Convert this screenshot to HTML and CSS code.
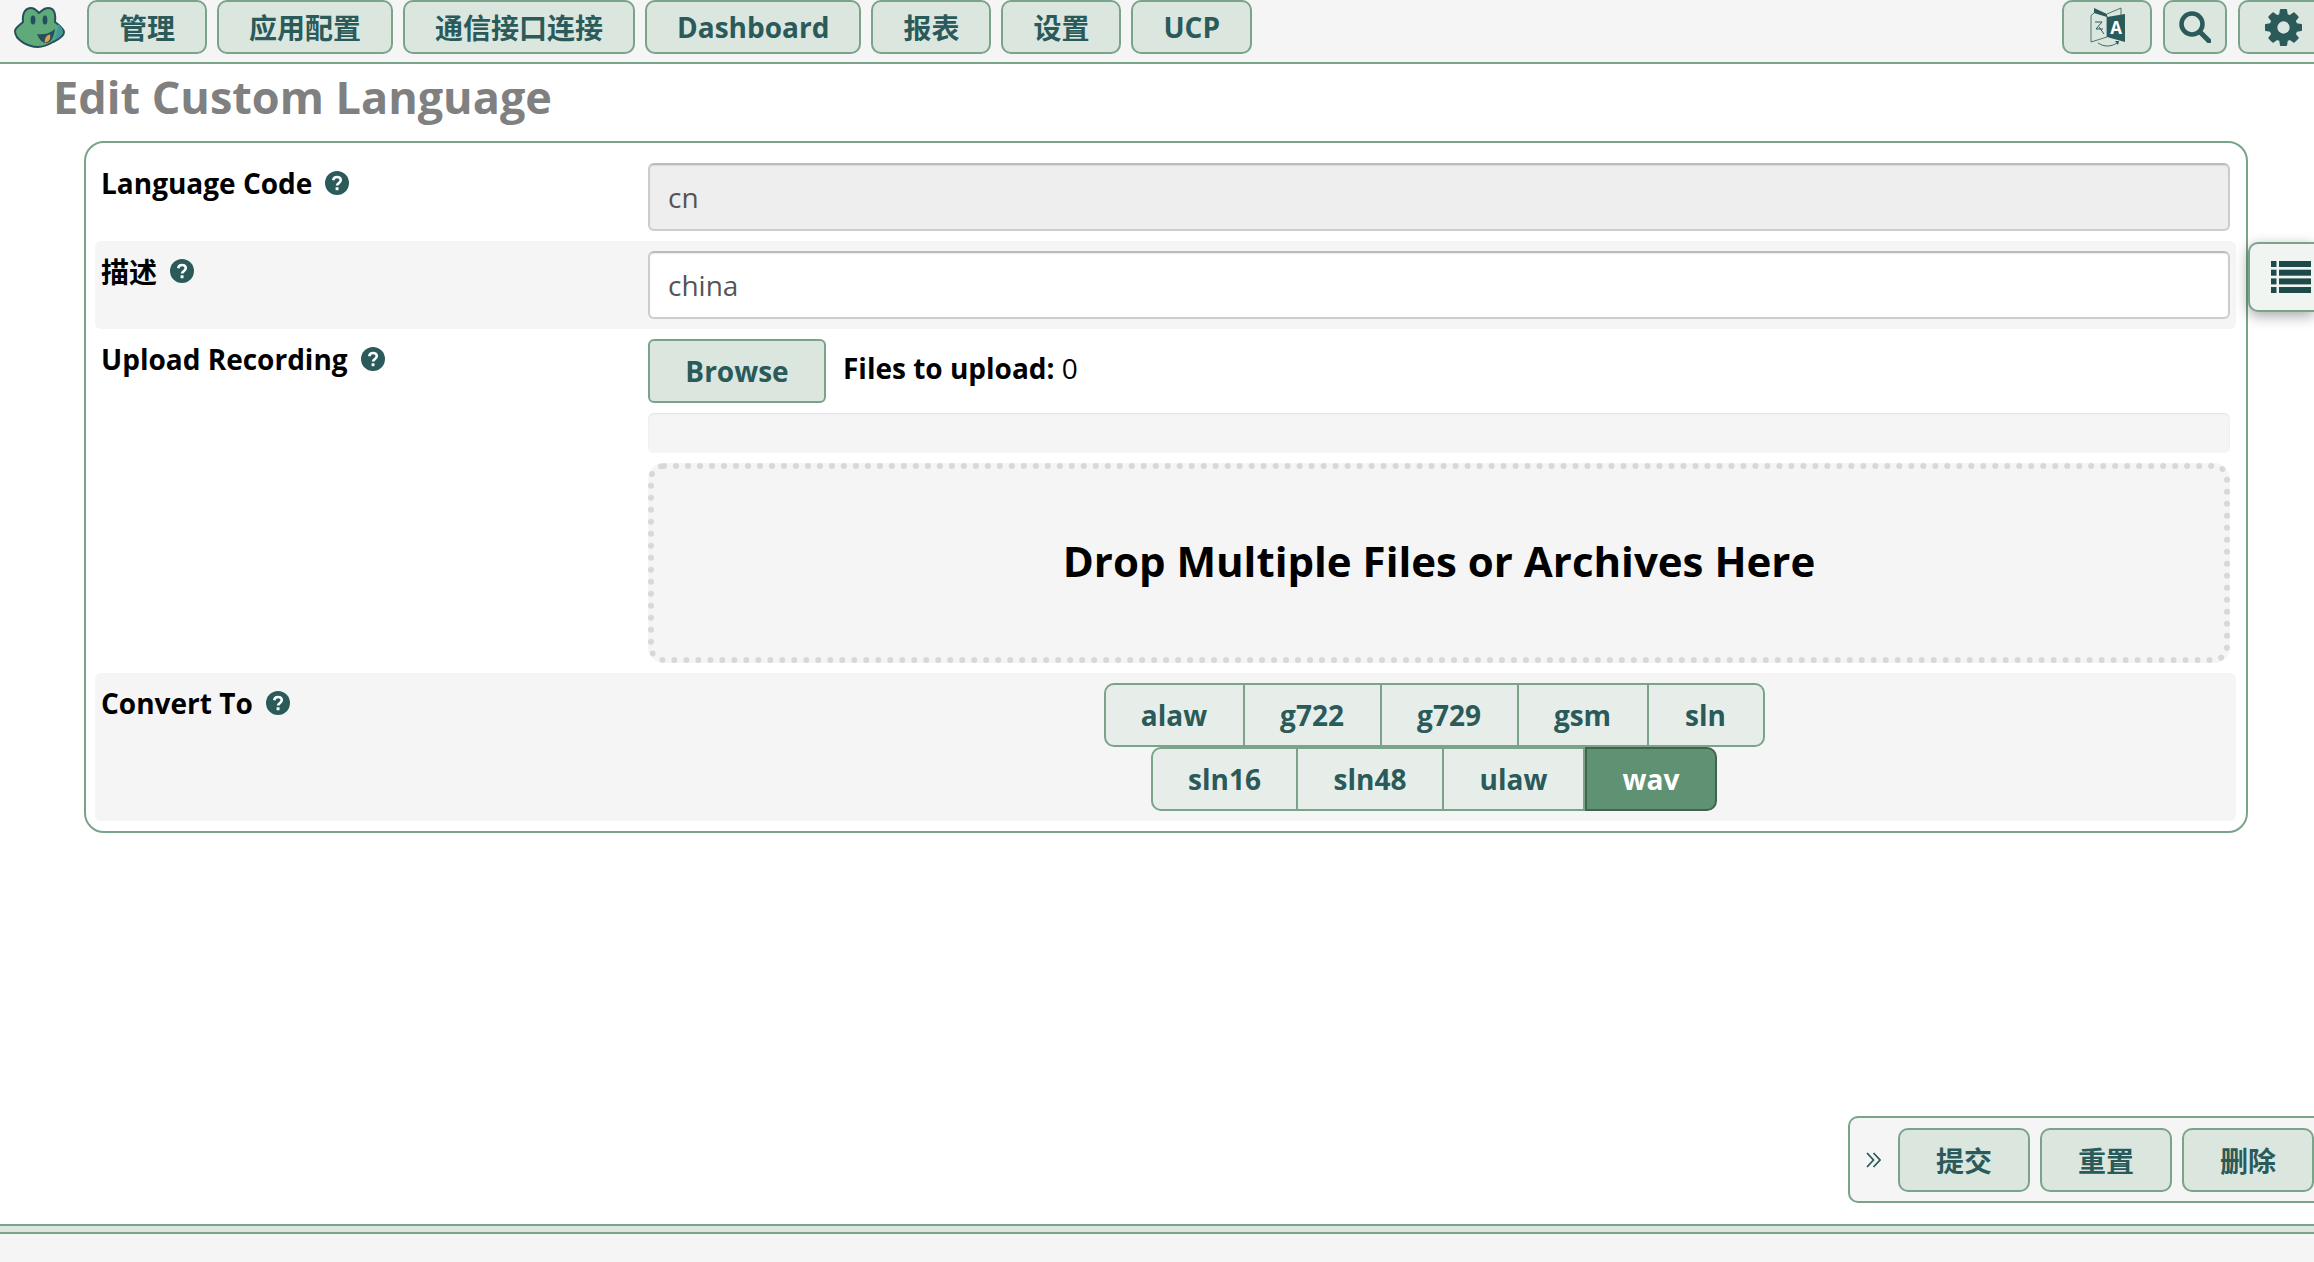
FILE: index.html
```html
<!DOCTYPE html>
<html lang="en">
<head>
<meta charset="UTF-8">
<meta name="viewport" content="width=device-width, initial-scale=1.0">
<title>Edit Custom Language</title>
<link rel="stylesheet" href="styles.css">
</head>
<body>
    <nav class="topnav">
        <svg class="logo" viewBox="0 0 51 41" aria-hidden="true">
            <path d="M9 15C8 5 12 1 17 1c4 0 6 3 8 5 3-2 4-5 9-5 6 0 8 5 7 14 4 3 9 7 9 10 0 5-7 8-11 10-5 3-10 5-15 5C14 40 1 33 1 24c0-3 5-6 8-9z" fill="#5fa97a" stroke="#23505a" stroke-width="2"/>
            <path d="M44 17c3 2 5 5 4.500 8-.5 4-5 7-9 9 2.500-5 4.500-11 4.500-17z" fill="#3f97a0"/>
            <ellipse cx="19" cy="13" rx="2.400" ry="4.500" fill="#23505a"/>
            <ellipse cx="31" cy="13" rx="2.400" ry="4.500" fill="#23505a"/>
            <path d="M23 27c6 1 12 0 18-5-1 8-4 14-9 14-4 0-7-4-9-9z" fill="#23505a"/>
            <path d="M31 35.500c-1-4 2-8 5-8 1 4-1 8-5 8z" fill="#ec9a4a"/>
        </svg>
        <a class="btn nav-btn">管理</a>
        <a class="btn nav-btn">应用配置</a>
        <a class="btn nav-btn">通信接口连接</a>
        <a class="btn nav-btn">Dashboard</a>
        <a class="btn nav-btn">报表</a>
        <a class="btn nav-btn">设置</a>
        <a class="btn nav-btn">UCP</a>
        <div class="nav-right">
            <a class="btn icon-btn lang-btn">
                <svg viewBox="0 0 35 41" width="35" height="41" aria-hidden="true">
                    <path d="M4 6L1 8.500V35l16-5V9" fill="none" stroke="#2a5a5a" stroke-width="0.800"/>
                    <path d="M17 7L31 1v7" fill="none" stroke="#2a5a5a" stroke-width="0.800"/>
                    <path d="M4 1l13 6v3L4 6z" fill="#2a5a5a"/>
                    <path d="M17 10l18-3v28l-18-5z" fill="#2a5a5a"/>
                    <text x="26" y="27" class="lang-a">A</text>
                    <path d="M5 15h7l-6 7h7M9 20l5 7" fill="none" stroke="#2a5a5a" stroke-width="1"/>
                    <path d="M8 36c6 4 13 4 19 0" fill="none" stroke="#2a5a5a" stroke-width="0.900"/>
                    <path d="M25 34h4l-1 4z" fill="#2a5a5a"/>
                </svg>
            </a>
            <a class="btn icon-btn search-btn">
                <svg viewBox="0 0 32 32" width="32" height="32" aria-hidden="true">
                    <circle cx="13" cy="13" r="10.500" fill="none" stroke="#2a5a5a" stroke-width="4.500"/>
                    <path d="M21 21l9 9" stroke="#2a5a5a" stroke-width="5" stroke-linecap="round"/>
                </svg>
            </a>
            <a class="btn icon-btn gear-btn">
                <svg viewBox="128 128 1536 1536" width="37" height="37" aria-hidden="true">
                    <path fill="#2a5a5a" d="M1152 896q0-106-75-181t-181-75-181 75-75 181 75 181 181 75 181-75 75-181zm512-109v222q0 12-8 23t-20 13l-185 28q-19 54-39 91 35 50 107 138 10 12 10 25t-9 23q-27 37-99 108t-94 71q-12 0-26-9l-138-108q-44 23-91 38-16 136-29 186-7 28-36 28h-222q-14 0-24.500-8.500t-11.500-21.500l-28-184q-49-16-90-37l-141 107q-10 9-25 9-14 0-25-11-126-114-165-168-7-10-7-23 0-12 8-23 15-21 51-66.500t54-70.500q-27-50-41-99l-183-27q-13-2-21-12.500t-8-23.500v-222q0-12 8-23t19-13l186-28q14-46 39-92-40-57-107-138-10-12-10-24 0-10 9-23 26-36 98.500-107.500t94.500-71.500q13 0 26 10l138 107q44-23 91-38 16-136 29-186 7-28 36-28h222q14 0 24.500 8.500t11.500 21.500l28 184q49 16 90 37l142-107q9-9 24-9 13 0 25 10 129 119 165 170 7 8 7 22 0 12-8 23-15 21-51 66.500t-54 70.500q26 50 41 98l183 28q13 2 21 12.500t8 23.500z"/>
                </svg>
            </a>
        </div>
    </nav>

    <main class="content">
        <h1 class="page-title">Edit Custom Language</h1>

        <form class="panel">
            <div class="form-row">
                <div class="form-label">Language Code
                    <svg class="help" viewBox="0 0 24 24"><use href="#help-icon"/></svg>
                </div>
                <div class="form-field">
                    <input class="text-input" type="text" value="cn" readonly>
                </div>
            </div>
            <div class="form-row shaded">
                <div class="form-label">描述
                    <svg class="help" viewBox="0 0 24 24"><use href="#help-icon"/></svg>
                </div>
                <div class="form-field">
                    <input class="text-input" type="text" value="china">
                </div>
            </div>
            <div class="form-row">
                <div class="form-label">Upload Recording
                    <svg class="help" viewBox="0 0 24 24"><use href="#help-icon"/></svg>
                </div>
                <div class="form-field">
                    <div class="upload-top">
                        <a class="btn browse-btn">Browse</a>
                        <span class="upload-count"><b>Files to upload:</b> 0</span>
                    </div>
                    <div class="progress"></div>
                    <div class="dropzone">Drop Multiple Files or Archives Here</div>
                </div>
            </div>
            <div class="form-row shaded">
                <div class="form-label">Convert To
                    <svg class="help" viewBox="0 0 24 24"><use href="#help-icon"/></svg>
                </div>
                <div class="form-field">
                    <div class="btn-set">
                        <div class="set-row">
                            <span class="set-item w-alaw">alaw</span>
                            <span class="set-item w-g722">g722</span>
                            <span class="set-item w-g729">g729</span>
                            <span class="set-item w-gsm">gsm</span>
                            <span class="set-item w-sln">sln</span>
                        </div>
                        <div class="set-row">
                            <span class="set-item w-sln16">sln16</span>
                            <span class="set-item w-sln48">sln48</span>
                            <span class="set-item w-ulaw">ulaw</span>
                            <span class="set-item w-wav active">wav</span>
                        </div>
                    </div>
                </div>
            </div>
        </form>
    </main>

    <a class="side-tab">
        <svg viewBox="0 0 40 32" width="40" height="32" aria-hidden="true">
            <g fill="#1f4a4a">
                <rect x="0" y="0" width="5.500" height="6"/><rect x="8" y="0" width="32" height="6"/>
                <rect x="0" y="8.700" width="5.500" height="6"/><rect x="8" y="8.700" width="32" height="6"/>
                <rect x="0" y="17.400" width="5.500" height="6"/><rect x="8" y="17.400" width="32" height="6"/>
                <rect x="0" y="26" width="5.500" height="6"/><rect x="8" y="26" width="32" height="6"/>
            </g>
        </svg>
    </a>

    <div class="action-bar">
        <svg class="chevrons" viewBox="0 0 15 16" width="15" height="16" aria-hidden="true">
            <path d="M1 1l6.500 7L1 15M7.500 1l6.500 7-6.500 7" fill="none" stroke="#2a5a5a" stroke-width="1.800"/>
        </svg>
        <a class="btn action-btn">提交</a>
        <a class="btn action-btn">重置</a>
        <a class="btn action-btn">删除</a>
    </div>

    <footer class="footer">
        <div class="footer-strip"></div>
    </footer>

    <svg class="sprites" aria-hidden="true">
        <symbol id="help-icon" viewBox="0 0 24 24">
            <circle cx="12" cy="12" r="12" fill="#2a5a5a"/>
            <path d="M8.200 9.300c.3-2 1.900-3.300 3.900-3.300 2.100 0 3.700 1.300 3.700 3.100 0 1.500-1 2.300-2 3-1 .7-1.700 1.200-1.700 2.500" fill="none" stroke="#fff" stroke-width="2.600"/>
            <rect x="10.600" y="16.300" width="2.900" height="2.900" fill="#fff"/>
        </symbol>
    </svg>
</body>
</html>
```

FILE: styles.css
```css
html, body {
    margin: 0;
    height: 100%;
}

body {
    display: flex;
    flex-direction: column;
    overflow: hidden;
    background-color: #fff;
    color: #000;
    font-family: "Open Sans", "Noto Sans CJK SC", sans-serif;
    font-size: 28px;
}

.sprites {
    position: absolute;
    width: 0;
    height: 0;
}

/* buttons */
.btn {
    display: flex;
    align-items: center;
    justify-content: center;
    box-sizing: border-box;
    border: 2px solid #7aa48a;
    border-radius: 10px;
    background-color: #dbe6de;
    color: #2a5a5a;
    font-weight: 700;
}

/* top bar */
.topnav {
    display: flex;
    align-items: flex-start;
    flex: none;
    box-sizing: border-box;
    height: 64px;
    padding-left: 14px;
    background-color: #f5f5f5;
    border-bottom: 2px solid #7aa48a;
}

.logo {
    width: 51px;
    height: 41px;
    margin: 7px 22px 0 0;
    flex: none;
}

.nav-btn {
    height: 54px;
    margin-right: 10px;
    padding: 0 30px;
}

.nav-right {
    display: flex;
    gap: 11px;
    margin-left: auto;
    margin-right: -14px;
}

.icon-btn {
    height: 54px;
}

.lang-btn {
    width: 90px;
}

.search-btn {
    width: 64px;
}

.gear-btn {
    width: 90px;
}

.lang-a {
    fill: #fff;
    font-size: 17px;
    font-weight: 700;
    text-anchor: middle;
}

/* content */
.content {
    flex: 1;
}

.page-title {
    margin: 0 0 10px 53px;
    color: #808080;
    font-size: 45px;
    font-weight: 700;
    line-height: 66px;
    padding-bottom: 1px;
}

.panel {
    box-sizing: border-box;
    width: 2164px;
    margin-left: 84px;
    padding: 10px;
    border: 2px solid #7aa48a;
    border-radius: 20px;
}

.panel .form-row {
    margin-left: -1px;
}

.form-row {
    display: grid;
    grid-template-columns: 553px 1fr;
    padding: 10px 6px 10px 0;
    border-radius: 6px;
}

.form-row.shaded {
    background-color: #f5f5f5;
}

.form-label {
    display: flex;
    align-items: center;
    align-self: start;
    gap: 13px;
    height: 40px;
    padding-left: 6px;
    font-weight: 700;
}

.help {
    width: 24px;
    height: 24px;
}

.text-input {
    display: block;
    box-sizing: border-box;
    width: 100%;
    height: 68px;
    padding: 0 18px;
    border: 2px solid #ccc;
    border-top-color: #bbb;
    border-radius: 6px;
    background-color: #fff;
    box-shadow: inset 0 1px 1px rgba(0, 0, 0, 0.08);
    color: #555;
    font-family: inherit;
    font-size: 28px;
}

.text-input[readonly] {
    background-color: #eee;
}

/* upload */
.upload-top {
    display: flex;
    align-items: flex-start;
    gap: 17px;
}

.browse-btn {
    width: 178px;
    height: 64px;
    border-radius: 6px;
}

.upload-count {
    line-height: 59px;
}

.progress {
    height: 40px;
    margin-top: 10px;
    border-radius: 6px;
    background-color: #f5f5f5;
    box-shadow: inset 0 1px 2px rgba(0, 0, 0, 0.08);
}

.dropzone {
    display: flex;
    align-items: center;
    justify-content: center;
    box-sizing: border-box;
    height: 200px;
    margin-top: 10px;
    padding-bottom: 6px;
    border: 6px dotted #d8d8d8;
    border-radius: 16px;
    background-color: #f5f5f5;
    font-size: 42px;
    font-weight: 700;
}

/* convert to */
.btn-set {
    display: flex;
    flex-direction: column;
    align-items: center;
    margin-left: -10px;
}

.set-row {
    display: flex;
    height: 64px;
}

.set-item {
    display: flex;
    align-items: center;
    justify-content: center;
    box-sizing: border-box;
    height: 64px;
    border: 2px solid #7aa48a;
    border-left-width: 0;
    background-color: #e7eee9;
    color: #2a5a5a;
    font-weight: 700;
}

.set-item:first-child {
    border-left-width: 2px;
    border-radius: 10px 0 0 10px;
}

.set-item:last-child {
    border-radius: 0 10px 10px 0;
}

.set-item.active {
    border: 2px solid #44634f;
    background-color: #5f9272;
    color: #fff;
}

.w-alaw { width: 141px; }
.w-g722 { width: 137px; }
.w-g729 { width: 137px; }
.w-gsm { width: 130px; }
.w-sln { width: 116px; }
.w-sln16 { width: 147px; }
.w-sln48 { width: 146px; }
.w-ulaw { width: 141px; }
.w-wav { width: 132px; }

/* overlays */
.side-tab {
    position: fixed;
    top: 242px;
    right: 0;
    display: flex;
    align-items: center;
    box-sizing: border-box;
    width: 66px;
    height: 70px;
    padding-left: 21px;
    border: 2px solid #7aa48a;
    border-right: none;
    border-radius: 10px 0 0 10px;
    background-color: #f0f5f2;
    box-shadow: 0 4px 14px rgba(0, 0, 0, 0.35);
}

.action-bar {
    position: fixed;
    right: 0;
    top: 1116px;
    display: flex;
    align-items: center;
    box-sizing: border-box;
    width: 466px;
    height: 87px;
    padding-left: 16px;
    border: 2px solid #7aa48a;
    border-right: none;
    border-radius: 10px 0 0 10px;
    background-color: #f5f5f5;
}

.chevrons {
    margin-right: 17px;
    flex: none;
}

.action-btn {
    width: 132px;
    height: 64px;
    margin-right: 10px;
    flex: none;
}

.action-btn:last-child {
    margin-right: 0;
}

/* footer */
.footer {
    flex: none;
    height: 38px;
    background-color: #f5f5f5;
}

.footer-strip {
    box-sizing: border-box;
    height: 10px;
    border-top: 2px solid #7aa48a;
    border-bottom: 2px solid #7aa48a;
    background-color: #dbe6de;
}
```
